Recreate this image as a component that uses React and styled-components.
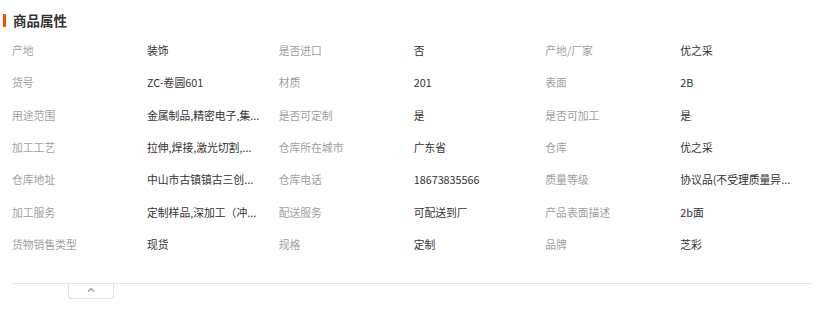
import React from "react";
import styled, { createGlobalStyle } from "styled-components";

const Global = createGlobalStyle`
  html, body { margin: 0; padding: 0; background: #fff; }
  body { font-family: "Noto Sans CJK SC", "Microsoft YaHei", sans-serif; }
`;

const Wrap = styled.div`
  width: 822px;
  padding: 10px 10px 0 0;
  box-sizing: border-box;
`;

const Title = styled.div`
  display: flex;
  align-items: center;
  height: 20px;
  padding-left: 3px;
  gap: 7px;
  font-size: 13.5px;
  font-weight: 700;
  color: #333;
`;

const Bar = styled.span`
  width: 3px;
  height: 13px;
  background: #ff4a00;
`;

const Grid = styled.div`
  display: grid;
  grid-template-columns: repeat(3, 1fr);
  grid-auto-rows: 32.33px;
  margin: 4px 0 0 12px;
`;

const Cell = styled.div`
  display: flex;
  align-items: center;
  font-size: 10.8px;
  min-width: 0;
`;

const Label = styled.span`
  width: 135px;
  flex: none;
  color: #a0a0a0;
`;

const Value = styled.span`
  color: #333;
  white-space: nowrap;
`;

const Footer = styled.div`
  margin: 23px 0 0 12px;
  border-top: 1px solid #e5e5e5;
  padding-left: 56px;
`;

const Toggle = styled.div`
  width: 46px;
  height: 15px;
  border: 1px solid #e2e2e2;
  border-top: none;
  border-radius: 0 0 3px 3px;
  display: flex;
  justify-content: center;
  padding-top: 3px;
  box-sizing: border-box;
  background: #fff;
`;

const items = [
  ["产地", "装饰"], ["是否进口", "否"], ["产地/厂家", "优之采"],
  ["货号", "ZC-卷圆601"], ["材质", "201"], ["表面", "2B"],
  ["用途范围", "金属制品,精密电子,集..."], ["是否可定制", "是"], ["是否可加工", "是"],
  ["加工工艺", "拉伸,焊接,激光切割,..."], ["仓库所在城市", "广东省"], ["仓库", "优之采"],
  ["仓库地址", "中山市古镇镇古三创..."], ["仓库电话", "18673835566"], ["质量等级", "协议品(不受理质量异..."],
  ["加工服务", "定制样品,深加工（冲..."], ["配送服务", "可配送到厂"], ["产品表面描述", "2b面"],
  ["货物销售类型", "现货"], ["规格", "定制"], ["品牌", "芝彩"],
];

export default function App() {
  return (
    <Wrap>
      <Global />
      <Title>
        <Bar />
        商品属性
      </Title>
      <Grid>
        {items.map(([k, v], i) => (
          <Cell key={i}>
            <Label>{k}</Label>
            <Value>{v}</Value>
          </Cell>
        ))}
      </Grid>
      <Footer>
        <Toggle>
          <svg width="8" height="5" viewBox="0 0 8 5">
            <path d="M1 4.5 L4 1.5 L7 4.5" fill="none" stroke="#999" strokeWidth="1.1" />
          </svg>
        </Toggle>
      </Footer>
    </Wrap>
  );
}
